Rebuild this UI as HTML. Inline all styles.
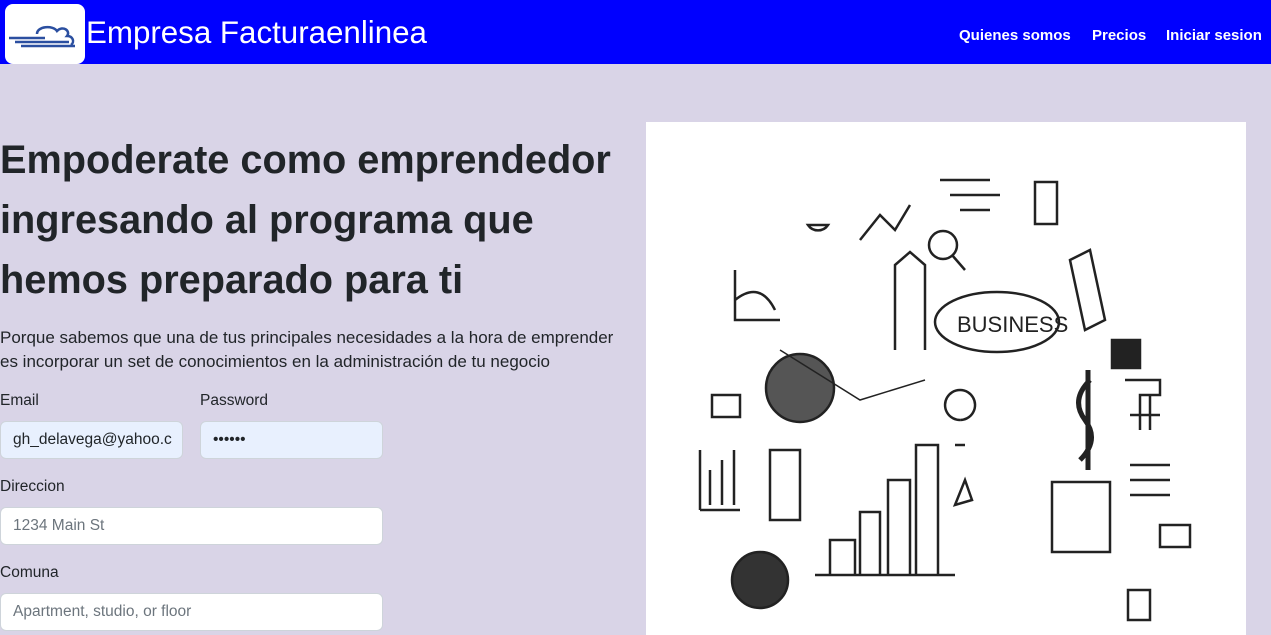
<!DOCTYPE html>
<html><head><meta charset="utf-8"><style>
*{box-sizing:border-box;margin:0;padding:0}
body{width:1271px;height:635px;overflow:hidden;background:#d9d4e7;font-family:"Liberation Sans",sans-serif;color:#212529;position:relative}
.hdr{position:absolute;left:0;top:0;width:1271px;height:64px;background:#0000ff}
.logo{position:absolute;left:5px;top:4px;width:80px;height:60px;background:#fff;border-radius:8px}
.title{position:absolute;left:86px;top:13px;color:#fff;font-size:31.3px;line-height:40px}
.nav{position:absolute;top:27px;color:#fff;font-weight:bold;font-size:15px}
h1{position:absolute;left:0;top:130px;font-size:39.7px;line-height:60px;font-weight:bold;width:640px}
p{position:absolute;left:0;top:326px;font-size:17px;line-height:24px;width:632px}
.lbl{position:absolute;font-size:15.5px}
.in{position:absolute;height:38px;border:1px solid #ced4da;border-radius:6px;background:#fff;font-size:15.5px;padding:0 12px;line-height:36px;color:#6c757d}
.fill{background:#e8f0fe;color:#212529}
.img{position:absolute;left:646px;top:122px;width:600px;height:513px;background:#fff;overflow:hidden}
</style></head><body>
<div class="hdr">
 <div class="logo"><svg width="80" height="60" viewBox="0 0 80 60"><g fill="none" stroke="#2b4fa0" stroke-width="2.5"><path d="M4 34H40M10 38H64M16 42H70"/><path d="M32 30c0-8 16-9 20-3c6-6 14 0 10 5c6 0 8 6 4 9"/></g></svg></div>
 <div class="title">Empresa Facturaenlinea</div>
 <div class="nav" style="left:959px">Quienes somos</div>
 <div class="nav" style="left:1092px">Precios</div>
 <div class="nav" style="left:1166px">Iniciar sesion</div>
</div>
<h1>Empoderate como emprendedor ingresando al programa que hemos preparado para ti</h1>
<p>Porque sabemos que una de tus principales necesidades a la hora de emprender es incorporar un set de conocimientos en la administración de tu negocio</p>
<div class="lbl" style="left:0;top:392px">Email</div>
<div class="lbl" style="left:200px;top:392px">Password</div>
<div class="in fill" style="left:0;top:421px;width:183px">gh_delavega@yahoo.c</div>
<div class="in fill" style="left:200px;top:421px;width:183px">••••••</div>
<div class="lbl" style="left:0;top:478px">Direccion</div>
<div class="in" style="left:0;top:507px;width:383px">1234 Main St</div>
<div class="lbl" style="left:0;top:564px">Comuna</div>
<div class="in" style="left:0;top:593px;width:383px">Apartment, studio, or floor</div>
<div class="img"><svg width="600" height="513" viewBox="646 122 600 513"><g fill="none" stroke="#222" stroke-width="2.5">
<ellipse cx="997" cy="322" rx="62" ry="30"/><text x="957" y="332" font-size="22" fill="#222" stroke="none" font-family="Liberation Sans">BUSINESS</text>
<circle cx="800" cy="388" r="34" fill="#555"/>
<path d="M830 575V540H855V575M860 575V512H880V575M888 575V480H910V575M916 575V445H938V575M815 575H955"/>
<path d="M895 350V265L910 252L925 265V350"/>
<path d="M780 350L860 400L925 380" stroke-width="1.5"/>
<rect x="1052" y="482" width="58" height="70"/><rect x="770" y="450" width="30" height="70"/>
<path d="M700 510V450M700 510H740M710 505V470M722 505V460M734 505V450"/>
<path d="M735 270V320H780M735 300Q760 280 775 310"/>
<circle cx="760" cy="580" r="28" fill="#333"/>
<path d="M1090 380Q1070 400 1085 420Q1100 440 1080 460M1088 370V470" stroke-width="5"/>
<path d="M1070 260L1090 250L1105 320L1085 330Z"/>
<rect x="1112" y="340" width="28" height="28" fill="#222"/>
<path d="M1125 380H1160V395H1140V430M1150 395V430M1130 415H1160"/>
<path d="M1130 465H1170M1130 480H1170M1130 495H1170"/>
<path d="M960 420a15 15 0 1 1 0.1 0M955 445h10"/>
<path d="M940 180H990M950 195H1000M960 210H990"/>
<rect x="1035" y="182" width="22" height="42"/>
<circle cx="943" cy="245" r="14"/><path d="M952 255L965 270"/>
<path d="M808 225a12 12 0 0 0 20 0Z"/>
<path d="M860 240L880 215L895 230L910 205"/>
<rect x="712" y="395" width="28" height="22"/><rect x="1160" y="525" width="30" height="22"/>
<rect x="1128" y="590" width="22" height="30"/>
<path d="M965 480L972 500L955 505Z"/>
</g></svg></div>
</body></html>
